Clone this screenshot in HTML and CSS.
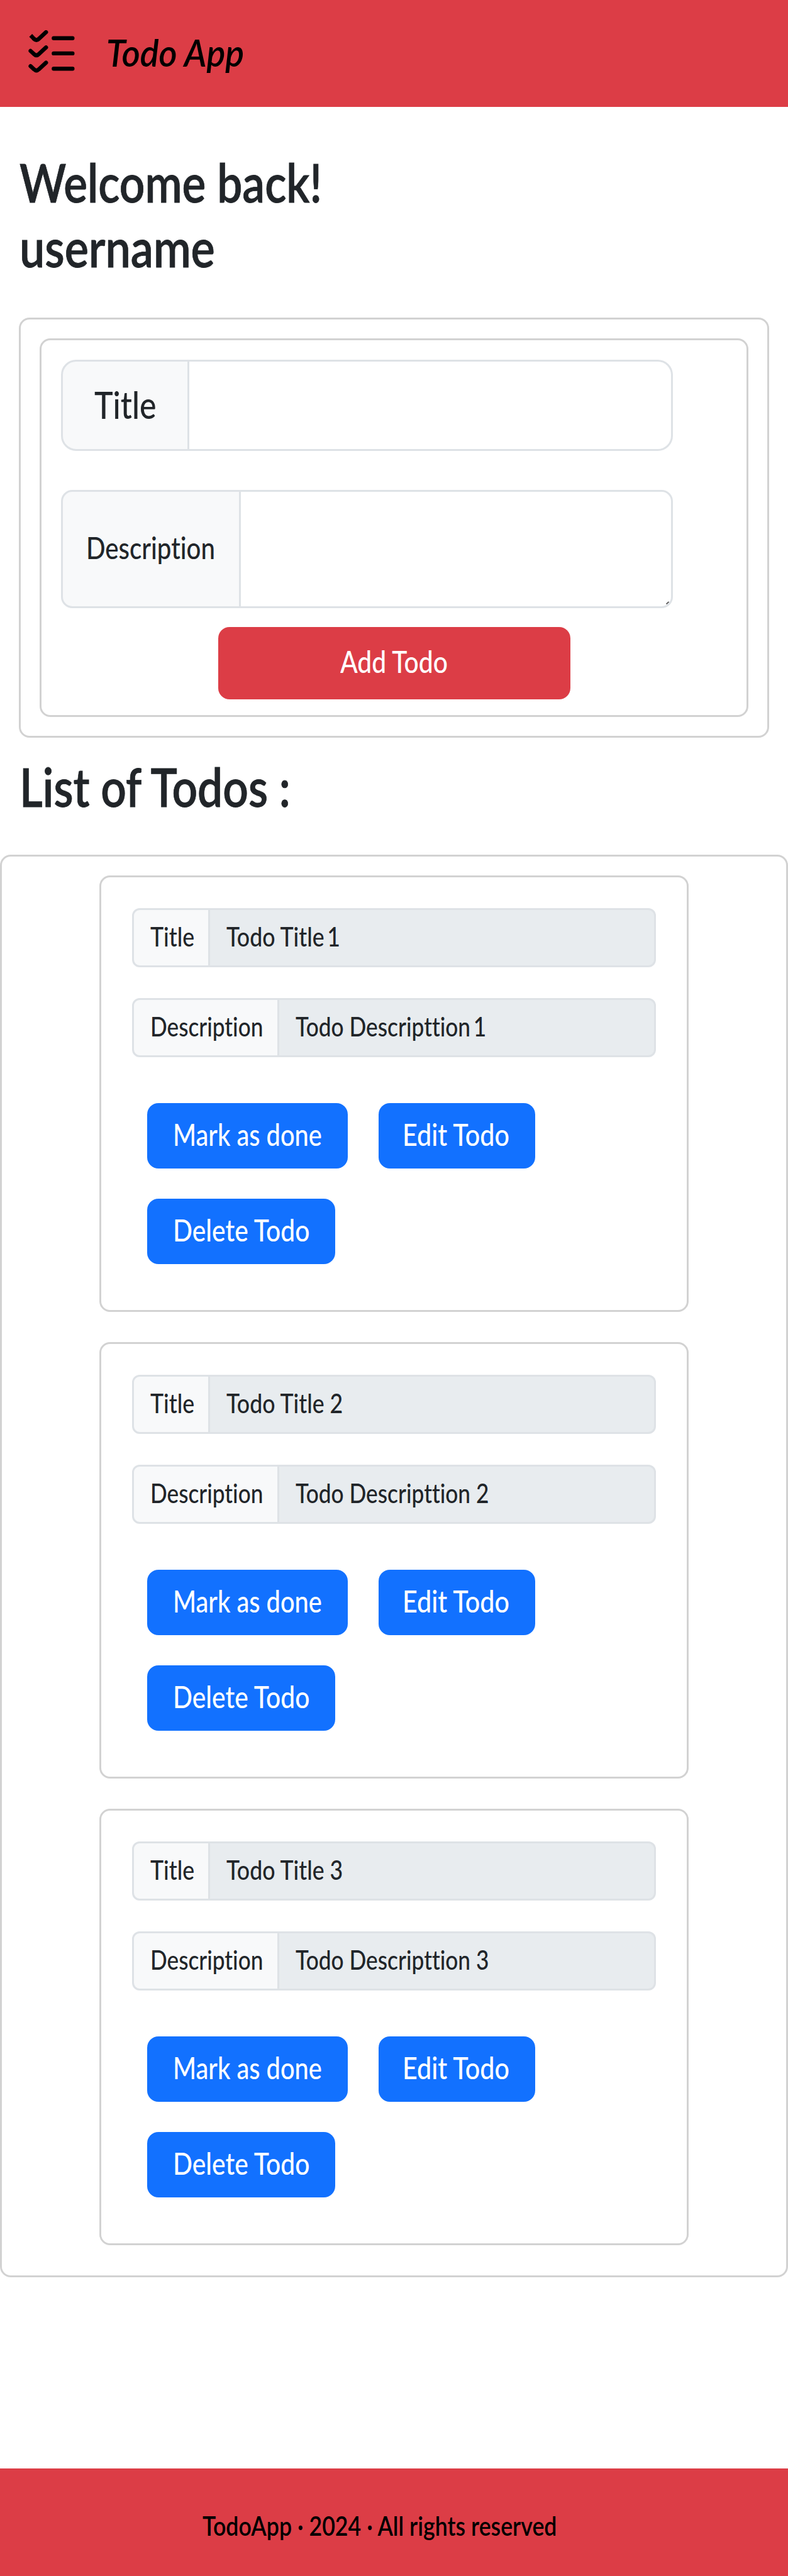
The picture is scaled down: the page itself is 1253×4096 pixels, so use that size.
FILE: index.html
```html
<!DOCTYPE html>
<html lang="en">
<head>
<meta charset="utf-8">
<title>Todo App</title>
<link rel="stylesheet" href="styles.css">
</head>
<body>
<header class="navbar">
  <svg class="logo" viewBox="0 0 74 68" fill="none" stroke="#000" stroke-width="6.4" stroke-linecap="round">
    <path stroke-linecap="butt" d="M3.8 8.2L9.2 13.9"/>
    <path d="M9.2 13.9q3.7 3.6 7.4 0L28.2 3.2M3.6 33l5.6 5.1q3.7 3.6 7.4 0L28.2 27.4M3.6 57.2l5.6 5.1q3.7 3.6 7.4 0L28.2 51.6M40.4 12.8H70.3M40.4 36.9H70.3M40.4 61.2H70.3"/>
  </svg>
  <span class="brand"><span class="t t-brand">Todo App</span></span>
</header>
<main>
  <h1 class="heading welcome"><span class="t t-welcome">Welcome back!</span><br><span class="t t-user">username</span></h1>
  <section class="panel">
    <form class="todo-form">
      <div class="field field-title">
        <label class="tag"><span class="t t-ftitle">Title</span></label>
        <div class="control"></div>
      </div>
      <div class="field field-desc">
        <label class="tag"><span class="t t-fdesc">Description</span></label>
        <div class="control"><svg class="grip" viewBox="0 0 5 5" stroke="#555" stroke-width="1.8"><path d="M.5 4.5L4.5 .8"/></svg></div>
      </div>
      <button type="button" class="btn add"><span class="t t-add">Add Todo</span></button>
    </form>
  </section>
  <h1 class="heading list-heading"><span class="t t-list">List of Todos :</span></h1>
  <section class="list">
    <article class="card">
      <div class="row row-title"><span class="tag"><span class="t t-title">Title</span></span><span class="value"><span class="t t-vtitle">Todo Title <span class="one">1</span></span></span></div>
      <div class="row row-desc"><span class="tag"><span class="t t-desc">Description</span></span><span class="value"><span class="t t-vdesc">Todo Descripttion <span class="one">1</span></span></span></div>
      <div class="actions">
        <button class="btn mark"><span class="t t-mark">Mark as done</span></button>
        <button class="btn edit"><span class="t t-edit">Edit Todo</span></button>
        <button class="btn delete"><span class="t t-delete">Delete Todo</span></button>
      </div>
    </article>
    <article class="card">
      <div class="row row-title"><span class="tag"><span class="t t-title">Title</span></span><span class="value"><span class="t t-vtitle">Todo Title 2</span></span></div>
      <div class="row row-desc"><span class="tag"><span class="t t-desc">Description</span></span><span class="value"><span class="t t-vdesc">Todo Descripttion 2</span></span></div>
      <div class="actions">
        <button class="btn mark"><span class="t t-mark">Mark as done</span></button>
        <button class="btn edit"><span class="t t-edit">Edit Todo</span></button>
        <button class="btn delete"><span class="t t-delete">Delete Todo</span></button>
      </div>
    </article>
    <article class="card">
      <div class="row row-title"><span class="tag"><span class="t t-title">Title</span></span><span class="value"><span class="t t-vtitle">Todo Title 3</span></span></div>
      <div class="row row-desc"><span class="tag"><span class="t t-desc">Description</span></span><span class="value"><span class="t t-vdesc">Todo Descripttion 3</span></span></div>
      <div class="actions">
        <button class="btn mark"><span class="t t-mark">Mark as done</span></button>
        <button class="btn edit"><span class="t t-edit">Edit Todo</span></button>
        <button class="btn delete"><span class="t t-delete">Delete Todo</span></button>
      </div>
    </article>
  </section>
</main>
<footer class="footer"><span class="t t-footer">TodoApp · 2024 · All rights reserved</span></footer>
</body>
</html>
```
FILE: styles.css
```css
* { box-sizing: border-box; }
body {
  margin: 0;
  height: 4096px;
  display: flex;
  flex-direction: column;
  background: #fff;
  color: #212529;
  font-family: Lato, "Open Sans", sans-serif;
  font-weight: 500;
  font-variant-ligatures: none;
  overflow-x: hidden;
}
/* Labels are set condensed */
.t {
  display: inline-block;
  white-space: nowrap;
  transform: scaleX(.85);
  transform-origin: 0 50%;
}
.t-brand { transform: scaleX(.945); }
.t-welcome { transform: scaleX(.848); }
.t-user { transform: scaleX(.856); }
.t-list { transform: scaleX(.848); }
.t-fdesc { transform: scaleX(.838); }
.t-mark { transform: scaleX(.828); }
.t-desc { transform: scaleX(.838); }
.t-vdesc { transform: scaleX(.84); }
.t-edit { transform: scaleX(.86); }
.one { margin-left: -5px; }
.navbar {
  height: 170px;
  flex: none;
  display: flex;
  align-items: center;
  padding: 0 45px 6px;
  background: #dc3d46;
  color: #000;
}
.logo { width: 74px; height: 68px; }
.brand {
  margin-left: 50px;
  font-size: 59px;
  font-style: italic;
  font-weight: 600;
  line-height: 72px;
  padding-top: 4px;
}
.heading {
  margin: 0;
  padding-left: 31px;
  font-size: 84px;
  line-height: 103px;
  font-weight: 600;
  -webkit-text-stroke: .8px currentColor;
}
.welcome { padding-top: 68px; height: 335px; }
.panel {
  margin: 0 30px;
  height: 668px;
  border: 3px solid #d2d2d2;
  border-radius: 17px;
  padding: 30px;
}
.todo-form {
  height: 602px;
  border: 3px solid #d2d2d2;
  border-radius: 17px;
  padding: 31px;
}
.field, .row { display: flex; }
.field { width: 973px; }
.field-title { height: 145px; margin-bottom: 62px; font-size: 59px; }
.field-desc { height: 188px; margin-bottom: 30px; font-size: 48px; }
.tag, .value {
  display: flex;
  align-items: center;
  flex: none;
  border: 3px solid #dee2e6;
}
.tag { background: #f8f9fa; }
.control { flex: 1; border: 3px solid #dee2e6; border-left: 0; }
.field-title .tag { width: 204px; padding: 0 0 2px 50px; border-radius: 24px 0 0 24px; }
.field-title .control { border-radius: 0 24px 24px 0; }
.field-desc .tag { width: 286px; padding: 0 0 6px 37px; border-radius: 18px 0 0 18px; }
.field-desc .control {
  border-radius: 0 18px 18px 0;
  display: flex;
  align-items: flex-end;
  justify-content: flex-end;
  padding: 3px;
}
.grip { width: 5px; height: 5px; }
.btn {
  display: flex;
  align-items: center;
  border: 0;
  border-radius: 18px;
  color: #fff;
  font: inherit;
  font-variant-ligatures: none;
  font-size: 48px;
}
.add { width: 560px; height: 115px; margin-left: 250px; padding: 0 0 6px 194px; background: #dc3d46; }
.list-heading { padding-top: 26px; height: 186px; }
.list {
  height: 2262px;
  border: 3px solid #d2d2d2;
  border-radius: 17px;
  padding: 30px 155px 0;
  display: flex;
  flex-direction: column;
  gap: 48px;
}
.card {
  height: 694px;
  flex: none;
  width: 937px;
  border: 3px solid #d2d2d2;
  border-radius: 17px;
  padding: 49px;
  font-size: 42px;
}
.row { height: 94px; margin-bottom: 49px; }
.row .tag { padding: 0 0 4px 26px; border-radius: 12px 0 0 12px; }
.row .value { flex: 1; border-left: 0; padding: 0 0 4px 26px; border-radius: 0 12px 12px 0; background: #e8ecef; }
.row-title .tag { width: 124px; }
.row-desc .tag { width: 234px; }
.actions {
  display: flex;
  flex-wrap: wrap;
  gap: 48px 49px;
  padding: 24px 24px 0;
}
.actions .btn { height: 104px; background: #1271ff; padding: 0 0 5px 41px; }
.actions .mark { width: 319px; }
.actions .edit { width: 249px; padding-left: 38px; }
.actions .delete { width: 299px; }
.footer {
  margin-top: auto;
  height: 171px;
  flex: none;
  display: flex;
  align-items: center;
  padding: 10px 0 0 322px;
  background: #dc3d46;
  color: #000;
  font-size: 42px;
  font-weight: 600;
}
```
